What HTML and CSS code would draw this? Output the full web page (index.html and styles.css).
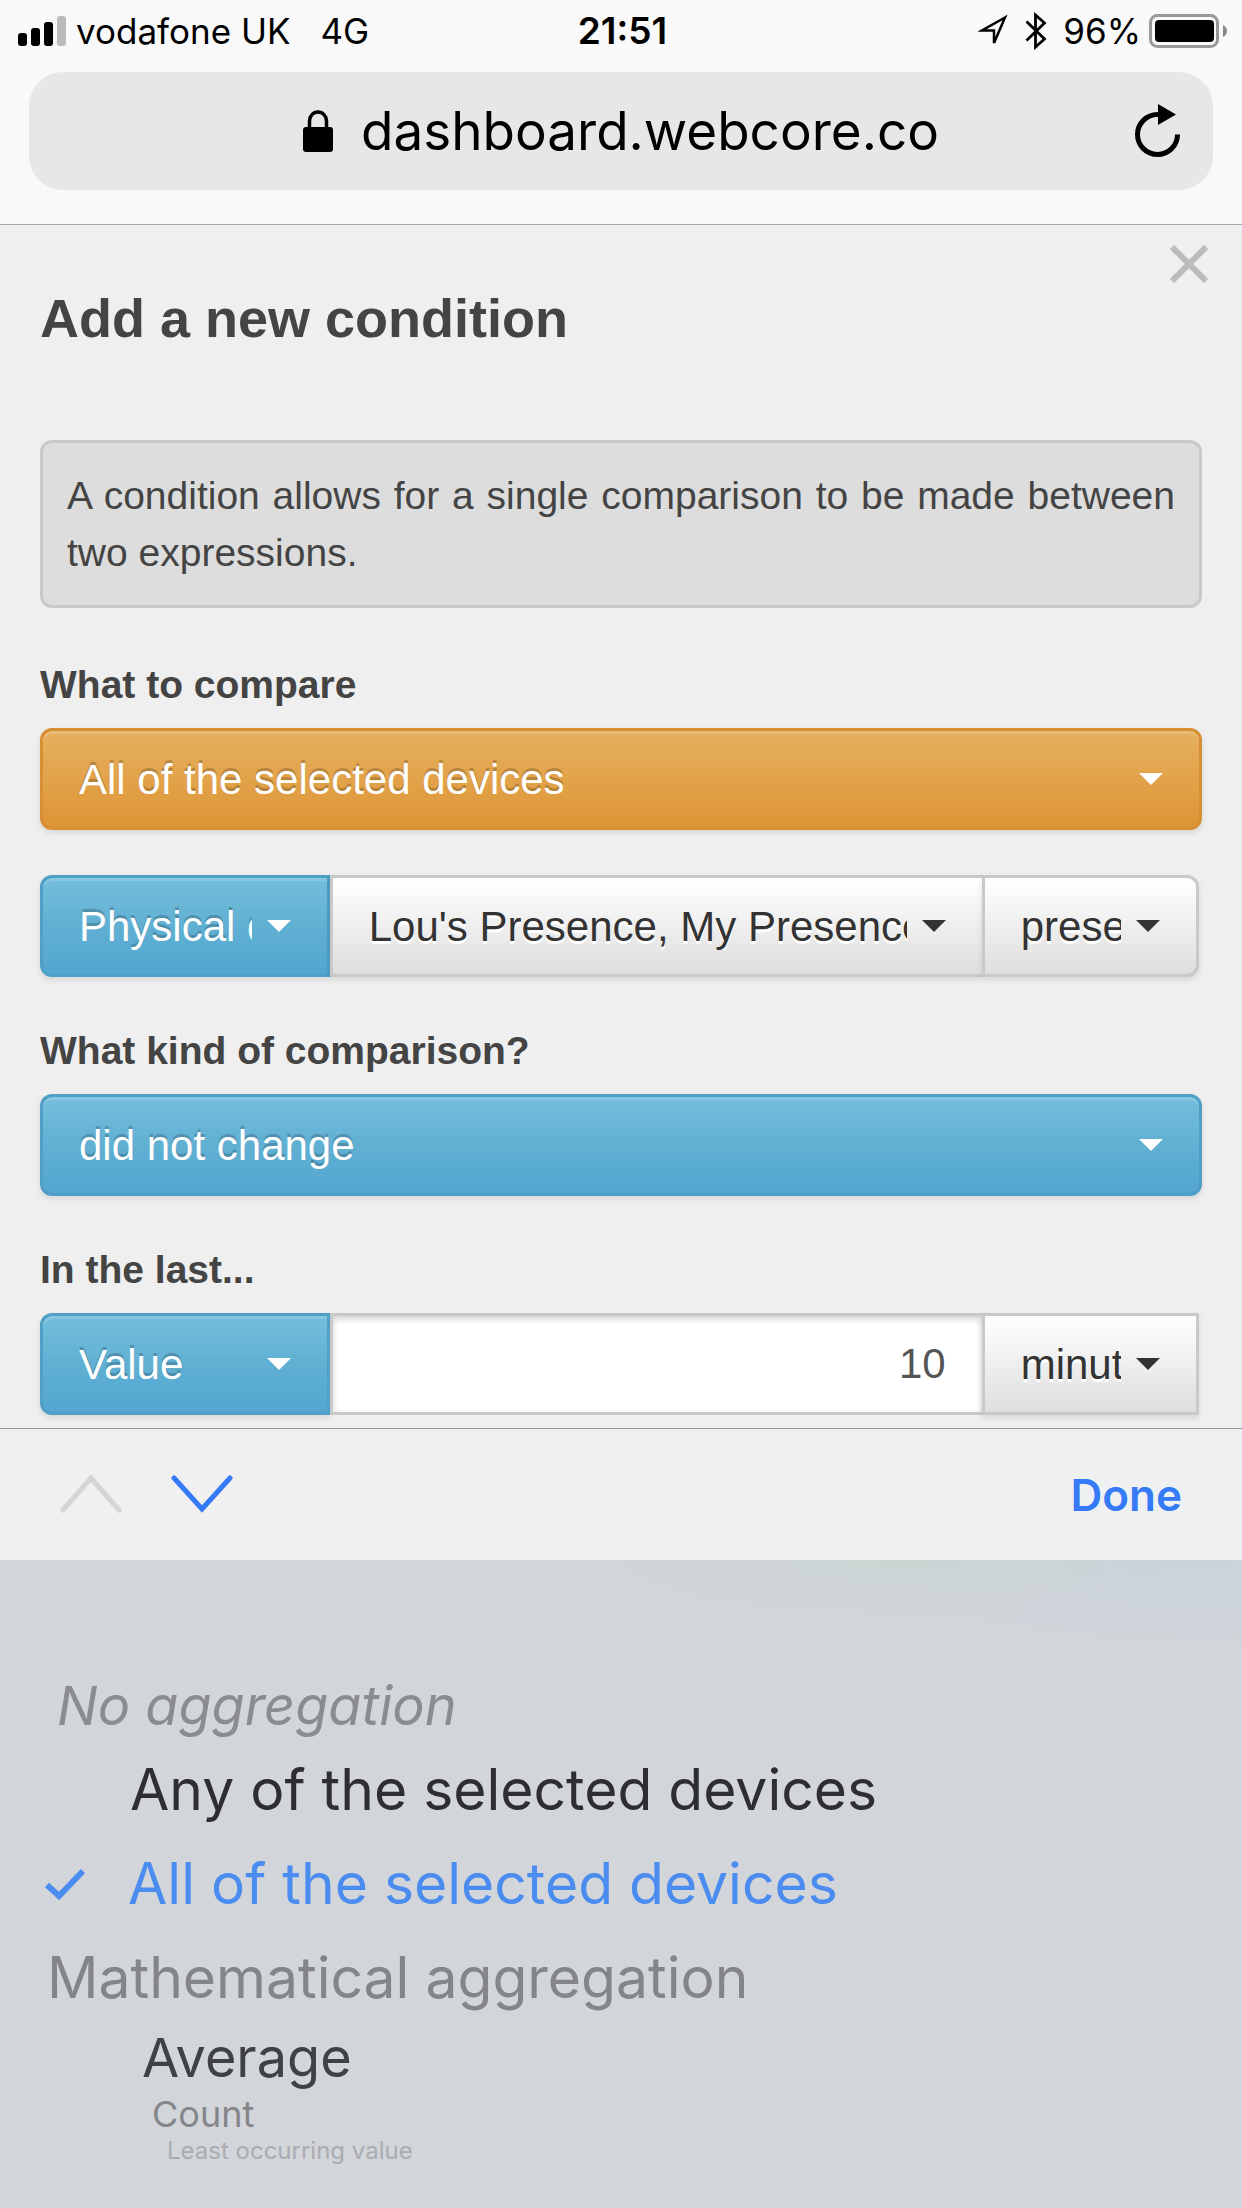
FILE: index.html
```html
<!DOCTYPE html>
<html lang="en">
<head>
<meta charset="utf-8">
<meta name="viewport" content="width=device-width, initial-scale=1">
<title>webCoRE Dashboard</title>
<link rel="stylesheet" href="styles.css">
</head>
<body>
<header class="browser">
  <div class="status">
    <div class="status-side">
      <svg class="signal" width="48" height="30" viewBox="0 0 48 30" aria-hidden="true">
        <rect x="0" y="17" width="9" height="13" rx="3"/>
        <rect x="13" y="12" width="9" height="18" rx="3"/>
        <rect x="26" y="6" width="9" height="24" rx="3"/>
        <rect x="39" y="0" width="9" height="30" rx="3" fill="#bbb"/>
      </svg>
      <span class="carrier">vodafone UK</span>
      <span>4G</span>
    </div>
    <time class="clock">21:51</time>
    <div class="status-side status-right">
      <svg width="30" height="34" viewBox="0 0 30 34" aria-hidden="true">
        <path d="M27 3.500 4 16.500H16V29Z" fill="none" stroke="#000" stroke-width="2.500"/>
      </svg>
      <svg class="bluetooth" width="22" height="38" viewBox="0 0 22 38" aria-hidden="true">
        <path d="M1.500 9.500 19.500 27 10.500 35V3L19.500 11 1.500 28.500" fill="none" stroke="#000" stroke-width="2.800"/>
      </svg>
      <span>96%</span>
      <svg class="battery" width="78" height="34" viewBox="0 0 78 34" aria-hidden="true">
        <rect x="1.500" y="1.500" width="67" height="31" rx="7" fill="none" stroke="#999" stroke-width="3"/>
        <rect x="6" y="6" width="59" height="22" rx="4"/>
        <path d="M74 11q4 2 4 6t-4 6Z" fill="#888"/>
      </svg>
    </div>
  </div>
  <div class="address">
    <a class="url" href="#">
      <svg width="30" height="42" viewBox="0 0 30 42" aria-hidden="true">
        <rect x="0" y="17" width="30" height="25" rx="3"/>
        <path d="M6.500 19V11a8.500 9 0 0 1 17 0V19" fill="none" stroke="#000" stroke-width="3.500"/>
      </svg>
      <span>dashboard.webcore.co</span>
    </a>
    <button class="reload" type="button" aria-label="Reload">
      <svg width="46" height="54" viewBox="0 0 46 54" aria-hidden="true">
        <path d="M42.500 30.500A20 20 0 1 1 22.500 10.500H24" fill="none" stroke="#000" stroke-width="5"/>
        <path d="M23 0 41 10.500 23 21Z"/>
      </svg>
    </button>
  </div>
</header>

<main class="dialog">
  <button class="close" type="button" aria-label="Close">
    <svg width="38" height="38" viewBox="0 0 38 38" aria-hidden="true">
      <path d="M2 2 36 36M36 2 2 36" stroke="#bbb" stroke-width="6"/>
    </svg>
  </button>
  <h1>Add a new condition</h1>
  <p class="note">A condition allows for a single comparison to be made between two expressions.</p>

  <form class="form">
    <div class="field">
      <label for="compare">What to compare</label>
      <select class="control orange" id="compare"><option>All of the selected devices</option></select>
    </div>
    <div class="group">
      <select class="control blue first" aria-label="Operand type"><option>Physical device</option></select>
      <select class="control plain middle" aria-label="Devices"><option>Lou's Presence, My Presence Sensor</option></select>
      <select class="control plain last" aria-label="Attribute"><option>presence</option></select>
    </div>
    <div class="field">
      <label for="kind">What kind of comparison?</label>
      <select class="control blue" id="kind"><option>did not change</option></select>
    </div>
    <div class="field">
      <label for="duration">In the last...</label>
      <div class="group square">
        <select class="control blue first" aria-label="Duration type"><option>Value</option></select>
        <input class="control number middle" id="duration" type="text" inputmode="numeric" value="10">
        <select class="control plain last" aria-label="Unit"><option>minutes</option></select>
      </div>
    </div>
  </form>
</main>

<section class="keyboard">
  <div class="toolbar">
    <button type="button" aria-label="Previous field" disabled>
      <svg width="62" height="42" viewBox="0 0 62 42" aria-hidden="true">
        <path d="M3 36 31 4 59 36" fill="none" stroke="#d5d5d5" stroke-width="5" stroke-linecap="round"/>
      </svg>
    </button>
    <button type="button" aria-label="Next field">
      <svg width="62" height="42" viewBox="0 0 62 42" aria-hidden="true">
        <path d="M3 4 31 35 59 4" fill="none" stroke="#357af6" stroke-width="5" stroke-linecap="round"/>
      </svg>
    </button>
    <button class="done" type="button">Done</button>
  </div>
  <ul class="picker" role="listbox" aria-label="What to compare">
    <li class="row heading upper">No aggregation</li>
    <li class="row" role="option">Any of the selected devices</li>
    <li class="row selected" role="option" aria-selected="true">
      <svg width="40" height="32" viewBox="0 0 40 32" aria-hidden="true">
        <path d="M2 17 14 28 38 3" fill="none" stroke="#4a8cf0" stroke-width="6"/>
      </svg>
      All of the selected devices
    </li>
    <li class="row heading">Mathematical aggregation</li>
    <li class="row far" role="option">Average</li>
    <li class="row farther" role="option">Count</li>
    <li class="row edge" role="option">Least occurring value</li>
  </ul>
</section>
</body>
</html>
```
FILE: styles.css
```css
* {
  box-sizing: border-box;
}

body {
  margin: 0;
  min-height: 100vh;
  display: flex;
  flex-direction: column;
  background: #efefef;
  color: #444;
  font-family: "Liberation Sans", Arial, sans-serif;
}

button {
  display: flex;
  padding: 0;
  border: 0;
  background: none;
  font: inherit;
  color: inherit;
}

/* Browser chrome */

.browser {
  padding-bottom: 34px;
  border-bottom: 1px solid #a5a5a8;
  background: #f9f9f9;
  color: #000;
  font-family: Inter, "Liberation Sans", sans-serif;
}

.status {
  display: grid;
  grid-template-columns: 1fr auto 1fr;
  align-items: center;
  height: 72px;
  padding: 0 15px 10px 18px;
  font-size: 35px;
  line-height: 40px;
}

.status-side {
  display: flex;
  align-items: center;
}

.status-right {
  justify-content: flex-end;
}

.carrier {
  margin: 0 30px 0 10px;
}

.clock {
  font-size: 37px;
  font-weight: 600;
}

.bluetooth {
  margin: 0 16px 0 17px;
}

.battery {
  margin-left: 8px;
}

.address {
  display: flex;
  align-items: center;
  height: 118px;
  margin: 0 29px;
  padding: 0 32px 0 78px;
  border-radius: 34px;
  background: #e6e7e9;
}

.url {
  flex: 1;
  display: flex;
  align-items: center;
  justify-content: center;
  gap: 28px;
  color: inherit;
  font-size: 53px;
  line-height: 64px;
  text-decoration: none;
}

/* Dialog */

.dialog {
  display: flex;
  flex-direction: column;
  padding: 20px 40px 13px;
}

.close {
  align-self: flex-end;
  margin-right: -6px;
}

h1 {
  margin: 4px 0 91px;
  font-size: 54px;
  line-height: 62px;
}

.note {
  margin: 0 0 48px;
  padding: 24px;
  border: 3px solid #c9c9c9;
  border-radius: 12px;
  background: #ddd;
  font-size: 39px;
  line-height: 57px;
  text-align: justify;
}

.form {
  display: flex;
  flex-direction: column;
  gap: 45px;
}

label {
  display: block;
  margin-bottom: 15px;
  font-size: 39px;
  font-weight: bold;
  line-height: 57px;
}

.control {
  appearance: none;
  display: block;
  width: 100%;
  height: 102px;
  margin: 0;
  padding: 0 75px 0 36px;
  border: 3px solid;
  border-radius: 12px;
  background-repeat: no-repeat;
  background-position: right 36px top 42px, 0 0;
  background-size: 24px 12px, 100% 100%;
  box-shadow: inset 0 3px 0 rgba(255, 255, 255, 0.15), 0 3px 6px rgba(0, 0, 0, 0.1);
  font: 42px "Liberation Sans", Arial, sans-serif;
}

.orange,
.blue {
  --caret: url("data:image/svg+xml,%3Csvg xmlns='http://www.w3.org/2000/svg' viewBox='0 0 24 12' preserveAspectRatio='none'%3E%3Cpath d='M0 0H24L12 12Z' fill='%23fff'/%3E%3C/svg%3E");
  color: #fff;
  text-shadow: 0 -3px 0 rgba(0, 0, 0, 0.2);
}

.orange {
  border-color: #d78f33;
  background-image: var(--caret), linear-gradient(#e6b05f, #de9535);
}

.blue {
  border-color: #4f9fc7;
  background-image: var(--caret), linear-gradient(#75bedc, #60b0d3 50%, #53a6d0);
}

.plain {
  --caret: url("data:image/svg+xml,%3Csvg xmlns='http://www.w3.org/2000/svg' viewBox='0 0 24 12' preserveAspectRatio='none'%3E%3Cpath d='M0 0H24L12 12Z' fill='%23333'/%3E%3C/svg%3E");
  border-color: #c9c9c9;
  background-image: var(--caret), linear-gradient(#fff, #dedede);
  color: #333;
  text-shadow: 0 3px 0 #fff;
}

.number {
  padding-right: 36px;
  border-color: #c9c9c9;
  background: #fff;
  box-shadow: inset 0 3px 6px rgba(0, 0, 0, 0.18);
  color: #555;
  text-align: right;
}

/* Joined controls share their inner borders */
.group {
  display: grid;
  grid-template-columns: 4fr 9fr 3fr;
  padding-right: 3px;
}

.group .first {
  border-radius: 12px 0 0 12px;
}

.group .middle {
  border-right: 0;
  border-radius: 0;
}

.group .last {
  border-radius: 0 12px 12px 0;
}

.group.square .last {
  border-radius: 0;
}

/* Form assistant and picker wheel */

.keyboard {
  flex: 1;
  display: flex;
  flex-direction: column;
  border-top: 1px solid #939598;
  font-family: Inter, "Liberation Sans", sans-serif;
}

.toolbar {
  display: flex;
  align-items: center;
  gap: 49px;
  height: 131px;
  padding: 0 60px;
  background: linear-gradient(90deg, #f0f0f0 50%, #eef0f2);
}

.done {
  margin-left: auto;
  color: #357af6;
  font-size: 44px;
  font-weight: 600;
  line-height: 52px;
}

.picker {
  flex: 1;
  margin: 0;
  padding: 108px 0 24px;
  background:
    radial-gradient(320px 60px at 73% 0, #cbd4d3, transparent),
    radial-gradient(360px 90px at 97% 0, #cad3dd, transparent),
    #d2d5da;
  list-style: none;
}

.row {
  padding-left: 130px;
  color: #2e2e30;
  font-size: 57px;
  line-height: 92px;
  white-space: nowrap;
}

.heading {
  padding-left: 47px;
  color: #848588;
}

.upper {
  padding-left: 57px;
  color: #8b8c90;
  font-size: 54px;
  font-style: italic;
  line-height: 76px;
}

.selected {
  display: flex;
  align-items: center;
  gap: 43px;
  padding-left: 45px;
  color: #4a8cf0;
  line-height: 96px;
}

.far {
  padding-left: 142px;
  color: #404144;
  font-size: 54px;
  line-height: 68px;
}

.farther {
  padding-left: 152px;
  color: #848689;
  font-size: 36px;
  line-height: 44px;
}

.edge {
  padding-left: 167px;
  color: #aaacb1;
  font-size: 24px;
  line-height: 30px;
}
```
